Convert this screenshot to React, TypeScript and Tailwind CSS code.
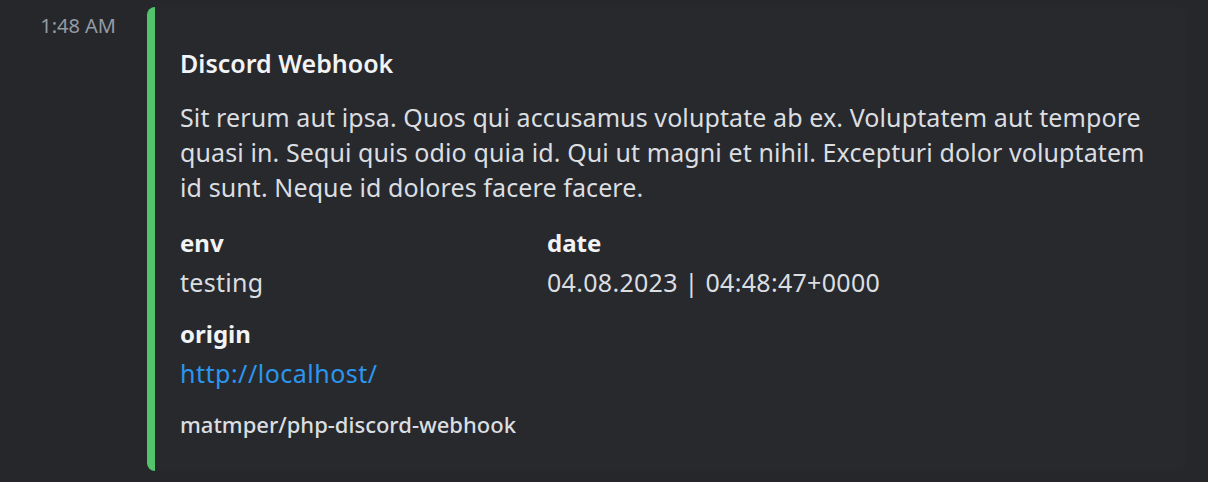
export default function App() {
  const fields = [
    { name: "env", value: "testing", inline: true },
    { name: "date", value: "04.08.2023 | 04:48:47+0000", inline: true },
  ];

  return (
    <div className="flex h-[482px] w-full bg-[#26272b] font-['Noto_Sans',sans-serif] antialiased">
      <div className="w-[147px] shrink-0 pr-[31px] pt-[14px] text-right text-[20px] leading-[24px] text-[#949ba4]">
        1:48 AM
      </div>

      <div className="mt-[7px] h-[464px] w-[1039px] rounded-[8px] border-l-[8px] border-[#52c46b] bg-[#28292d] pl-[25px] pr-[32px] pt-[39px]">
        <div className="text-[25px] font-semibold leading-[35px] text-[#f2f3f5]">
          Discord Webhook
        </div>

        <p className="mt-[19px] text-[25px] leading-[35px] tracking-[0.1px] text-[#dbdee1]">
          Sit rerum aut ipsa. Quos qui accusamus voluptate ab ex. Voluptatem aut
          tempore quasi in. Sequi quis odio quia id. Qui ut magni et nihil.
          Excepturi dolor voluptatem id sunt. Neque id dolores facere facere.
        </p>

        <div className="mt-[20px] grid grid-cols-[367px_1fr]">
          {fields.map((f) => (
            <div key={f.name}>
              <div className="text-[24px] font-bold leading-[35px] text-[#f2f3f5]">
                {f.name}
              </div>
              <div className="mt-[5px] text-[25px] leading-[35px] tracking-[0.3px] text-[#dbdee1]">
                {f.value}
              </div>
            </div>
          ))}
        </div>

        <div className="mt-[16px]">
          <div className="text-[24px] font-bold leading-[35px] text-[#f2f3f5]">
            origin
          </div>
          <a
            href="#"
            className="mt-[5px] block w-fit text-[25px] leading-[35px] tracking-[0.5px] text-[#2b96ef]"
          >
            http://localhost/
          </a>
        </div>

        <div className="mt-[19px] text-[22px] font-medium leading-[28px] text-[#dbdee1]">
          matmper/php-discord-webhook
        </div>
      </div>
    </div>
  );
}
